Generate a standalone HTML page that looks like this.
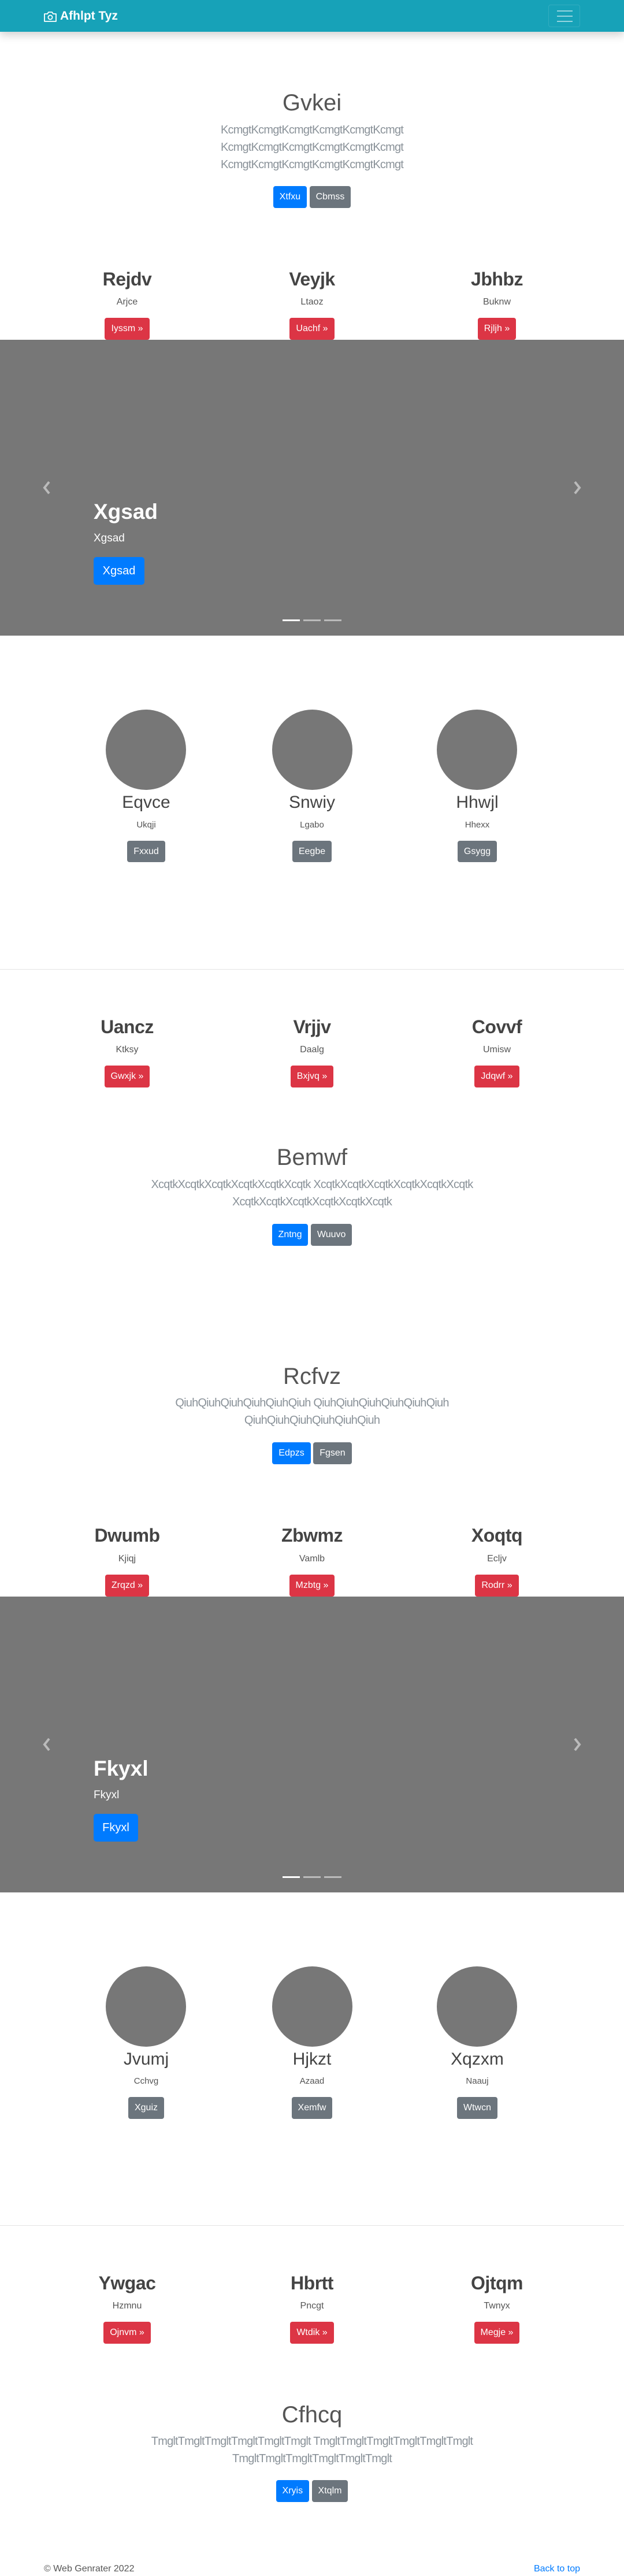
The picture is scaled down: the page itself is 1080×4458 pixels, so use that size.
<!DOCTYPE html>
<html><head><meta charset="utf-8"><style>
*{margin:0;padding:0;box-sizing:border-box}
body{width:1080px;height:4458px;position:relative;background:#fff;font-family:"Liberation Sans",Arial,sans-serif;overflow:hidden}
.a{position:absolute}
.t{position:absolute;text-align:center;white-space:nowrap}
.nav{left:0;top:0;width:1080px;height:55px;background:#17a2b8;box-shadow:0 6px 14px rgba(0,0,0,.18);z-index:2}
.h2{font-size:32px;color:#444;font-weight:bold;letter-spacing:-0.5px}
.sub{font-size:16px;color:#555}
.btn{display:inline-block;height:38px;line-height:38px;padding:0 11px;border-radius:4px;color:#fff;font-size:16px;vertical-align:top}
.red{background:#dc3545}.blue{background:#007bff}.gray{background:#6c757d}
.big{font-size:40px;color:#555;font-weight:300}
.lead{font-size:20px;color:#8a9299;letter-spacing:-0.8px;line-height:30px}
.car{left:0;width:1080px;height:512px;background:#777}
.circ{width:139px;height:139px;border-radius:50%;background:#777}
.ch{font-size:30px;color:#444}
.hr{left:0;width:1080px;height:1px;background:#e3e3e3}
.ind{position:absolute;height:3px;width:30px;background:rgba(255,255,255,.5)}
</style></head><body>
<div class="a nav">
 <svg class="a" style="left:75px;top:18px" width="24" height="22" viewBox="0 0 24 22"><path d="M2 6h5l2-3h6l2 3h5v13H2z" fill="none" stroke="#fff" stroke-width="1.8" stroke-linejoin="round"/><circle cx="12" cy="12" r="3.6" fill="none" stroke="#fff" stroke-width="1.8"/></svg>
 <div class="a" style="left:104px;top:15px;font-size:21px;font-weight:bold;color:#fff;line-height:26px">Afhlpt Tyz</div>
 <div class="a" style="left:949px;top:8px;width:55px;height:39px;border:1px solid rgba(255,255,255,.12);border-radius:4px"></div>
 <div class="a" style="left:964px;top:18px;width:27px;height:2px;background:rgba(255,255,255,.55)"></div>
 <div class="a" style="left:964px;top:27px;width:27px;height:2px;background:rgba(255,255,255,.55)"></div>
 <div class="a" style="left:964px;top:36px;width:27px;height:2px;background:rgba(255,255,255,.55)"></div>
</div>

<!-- jumbo 1 -->
<div class="t big" style="left:0;width:1080px;top:153px;line-height:50px">Gvkei</div>
<div class="t lead" style="left:0;width:1080px;top:210px">KcmgtKcmgtKcmgtKcmgtKcmgtKcmgt<br>KcmgtKcmgtKcmgtKcmgtKcmgtKcmgt<br>KcmgtKcmgtKcmgtKcmgtKcmgtKcmgt</div>
<div class="t" style="left:0;width:1080px;top:322px"><span class="btn blue">Xtfxu</span> <span class="btn gray">Cbmss</span></div>

<!-- cols 1 -->
<div class="t h2" style="left:70px;width:300px;top:465px">Rejdv</div>
<div class="t h2" style="left:390px;width:300px;top:465px">Veyjk</div>
<div class="t h2" style="left:710px;width:300px;top:465px">Jbhbz</div>
<div class="t sub" style="left:70px;width:300px;top:514px">Arjce</div>
<div class="t sub" style="left:390px;width:300px;top:514px">Ltaoz</div>
<div class="t sub" style="left:710px;width:300px;top:514px">Buknw</div>
<div class="t" style="left:70px;width:300px;top:550px"><span class="btn red">Iyssm »</span></div>
<div class="t" style="left:390px;width:300px;top:550px"><span class="btn red">Uachf »</span></div>
<div class="t" style="left:710px;width:300px;top:550px"><span class="btn red">Rjljh »</span></div>

<!-- carousel 1 -->
<div class="a car" style="top:588px">
 <svg class="a" style="left:72px;top:244px" width="18" height="24" viewBox="0 0 18 24"><path d="M13 2L5 12l8 10" fill="none" stroke="#bbb" stroke-width="4"/></svg>
 <svg class="a" style="left:990px;top:244px" width="18" height="24" viewBox="0 0 18 24"><path d="M5 2l8 10-8 10" fill="none" stroke="#bbb" stroke-width="4"/></svg>
 <div class="a" style="left:162px;top:276px;font-size:37px;font-weight:bold;color:#fff;line-height:44px">Xgsad</div>
 <div class="a" style="left:162px;top:332px;font-size:19px;color:#fff;line-height:24px">Xgsad</div>
 <div class="a" style="left:162px;top:376px;width:88px;height:48px;background:#007bff;border-radius:5px;color:#fff;font-size:20px;line-height:48px;text-align:center">Xgsad</div>
 <div class="ind" style="left:489px;top:484px;background:#fff"></div>
 <div class="ind" style="left:525px;top:484px"></div>
 <div class="ind" style="left:561px;top:484px"></div>
</div>

<!-- circles 1 -->
<div class="a circ" style="left:183px;top:1228px"></div>
<div class="a circ" style="left:471px;top:1228px"></div>
<div class="a circ" style="left:756px;top:1228px"></div>
<div class="t ch" style="left:103px;width:300px;top:1372px">Eqvce</div>
<div class="t ch" style="left:390px;width:300px;top:1372px">Snwiy</div>
<div class="t ch" style="left:676px;width:300px;top:1372px">Hhwjl</div>
<div class="t sub" style="left:103px;width:300px;top:1419px;font-size:15px">Ukqji</div>
<div class="t sub" style="left:390px;width:300px;top:1419px;font-size:15px">Lgabo</div>
<div class="t sub" style="left:676px;width:300px;top:1419px;font-size:15px">Hhexx</div>
<div class="t" style="left:103px;width:300px;top:1455px"><span class="btn gray" style="height:37px;line-height:37px">Fxxud</span></div>
<div class="t" style="left:390px;width:300px;top:1455px"><span class="btn gray" style="height:37px;line-height:37px">Eegbe</span></div>
<div class="t" style="left:676px;width:300px;top:1455px"><span class="btn gray" style="height:37px;line-height:37px">Gsygg</span></div>
<div class="a hr" style="top:1677px"></div>

<!-- cols 2 -->
<div class="t h2" style="left:70px;width:300px;top:1759px">Uancz</div>
<div class="t h2" style="left:390px;width:300px;top:1759px">Vrjjv</div>
<div class="t h2" style="left:710px;width:300px;top:1759px">Covvf</div>
<div class="t sub" style="left:70px;width:300px;top:1808px">Ktksy</div>
<div class="t sub" style="left:390px;width:300px;top:1808px">Daalg</div>
<div class="t sub" style="left:710px;width:300px;top:1808px">Umisw</div>
<div class="t" style="left:70px;width:300px;top:1844px"><span class="btn red">Gwxjk »</span></div>
<div class="t" style="left:390px;width:300px;top:1844px"><span class="btn red">Bxjvq »</span></div>
<div class="t" style="left:710px;width:300px;top:1844px"><span class="btn red">Jdqwf »</span></div>

<div class="t big" style="left:0;width:1080px;top:1978px;line-height:50px">Bemwf</div>
<div class="t lead" style="left:0;width:1080px;top:2035px">XcqtkXcqtkXcqtkXcqtkXcqtkXcqtk XcqtkXcqtkXcqtkXcqtkXcqtkXcqtk<br>XcqtkXcqtkXcqtkXcqtkXcqtkXcqtk</div>
<div class="t" style="left:0;width:1080px;top:2118px"><span class="btn blue">Zntng</span> <span class="btn gray">Wuuvo</span></div>

<div class="t big" style="left:0;width:1080px;top:2357px;line-height:50px">Rcfvz</div>
<div class="t lead" style="left:0;width:1080px;top:2413px">QiuhQiuhQiuhQiuhQiuhQiuh QiuhQiuhQiuhQiuhQiuhQiuh<br>QiuhQiuhQiuhQiuhQiuhQiuh</div>
<div class="t" style="left:0;width:1080px;top:2496px"><span class="btn blue">Edpzs</span> <span class="btn gray">Fgsen</span></div>

<!-- cols 3 -->
<div class="t h2" style="left:70px;width:300px;top:2639px">Dwumb</div>
<div class="t h2" style="left:390px;width:300px;top:2639px">Zbwmz</div>
<div class="t h2" style="left:710px;width:300px;top:2639px">Xoqtq</div>
<div class="t sub" style="left:70px;width:300px;top:2689px">Kjiqj</div>
<div class="t sub" style="left:390px;width:300px;top:2689px">Vamlb</div>
<div class="t sub" style="left:710px;width:300px;top:2689px">Ecljv</div>
<div class="t" style="left:70px;width:300px;top:2725px"><span class="btn red">Zrqzd »</span></div>
<div class="t" style="left:390px;width:300px;top:2725px"><span class="btn red">Mzbtg »</span></div>
<div class="t" style="left:710px;width:300px;top:2725px"><span class="btn red">Rodrr »</span></div>

<!-- carousel 2 -->
<div class="a car" style="top:2763px">
 <svg class="a" style="left:72px;top:244px" width="18" height="24" viewBox="0 0 18 24"><path d="M13 2L5 12l8 10" fill="none" stroke="#bbb" stroke-width="4"/></svg>
 <svg class="a" style="left:990px;top:244px" width="18" height="24" viewBox="0 0 18 24"><path d="M5 2l8 10-8 10" fill="none" stroke="#bbb" stroke-width="4"/></svg>
 <div class="a" style="left:162px;top:276px;font-size:37px;font-weight:bold;color:#fff;line-height:44px">Fkyxl</div>
 <div class="a" style="left:162px;top:332px;font-size:19px;color:#fff;line-height:24px">Fkyxl</div>
 <div class="a" style="left:162px;top:376px;width:77px;height:48px;background:#007bff;border-radius:5px;color:#fff;font-size:20px;line-height:48px;text-align:center">Fkyxl</div>
 <div class="ind" style="left:489px;top:484px;background:#fff"></div>
 <div class="ind" style="left:525px;top:484px"></div>
 <div class="ind" style="left:561px;top:484px"></div>
</div>

<!-- circles 2 -->
<div class="a circ" style="left:183px;top:3403px"></div>
<div class="a circ" style="left:471px;top:3403px"></div>
<div class="a circ" style="left:756px;top:3403px"></div>
<div class="t ch" style="left:103px;width:300px;top:3547px">Jvumj</div>
<div class="t ch" style="left:390px;width:300px;top:3547px">Hjkzt</div>
<div class="t ch" style="left:676px;width:300px;top:3547px">Xqzxm</div>
<div class="t sub" style="left:103px;width:300px;top:3593px;font-size:15px">Cchvg</div>
<div class="t sub" style="left:390px;width:300px;top:3593px;font-size:15px">Azaad</div>
<div class="t sub" style="left:676px;width:300px;top:3593px;font-size:15px">Naauj</div>
<div class="t" style="left:103px;width:300px;top:3629px"><span class="btn gray" style="height:38px;line-height:38px">Xguiz</span></div>
<div class="t" style="left:390px;width:300px;top:3629px"><span class="btn gray" style="height:38px;line-height:38px">Xemfw</span></div>
<div class="t" style="left:676px;width:300px;top:3629px"><span class="btn gray" style="height:38px;line-height:38px">Wtwcn</span></div>
<div class="a hr" style="top:3851px"></div>

<!-- cols 4 -->
<div class="t h2" style="left:70px;width:300px;top:3933px">Ywgac</div>
<div class="t h2" style="left:390px;width:300px;top:3933px">Hbrtt</div>
<div class="t h2" style="left:710px;width:300px;top:3933px">Ojtqm</div>
<div class="t sub" style="left:70px;width:300px;top:3982px">Hzmnu</div>
<div class="t sub" style="left:390px;width:300px;top:3982px">Pncgt</div>
<div class="t sub" style="left:710px;width:300px;top:3982px">Twnyx</div>
<div class="t" style="left:70px;width:300px;top:4018px"><span class="btn red">Ojnvm »</span></div>
<div class="t" style="left:390px;width:300px;top:4018px"><span class="btn red">Wtdik »</span></div>
<div class="t" style="left:710px;width:300px;top:4018px"><span class="btn red">Megje »</span></div>

<div class="t big" style="left:0;width:1080px;top:4154px;line-height:50px">Cfhcq</div>
<div class="t lead" style="left:0;width:1080px;top:4210px">TmgltTmgltTmgltTmgltTmgltTmglt TmgltTmgltTmgltTmgltTmgltTmglt<br>TmgltTmgltTmgltTmgltTmgltTmglt</div>
<div class="t" style="left:0;width:1080px;top:4292px"><span class="btn blue">Xryis</span> <span class="btn gray">Xtqlm</span></div>

<div class="a" style="left:76px;top:4436px;font-size:16px;color:#555;line-height:20px">© Web Genrater 2022</div>
<div class="a" style="right:76px;top:4436px;font-size:16px;color:#007bff;line-height:20px">Back to top</div>
</body></html>
